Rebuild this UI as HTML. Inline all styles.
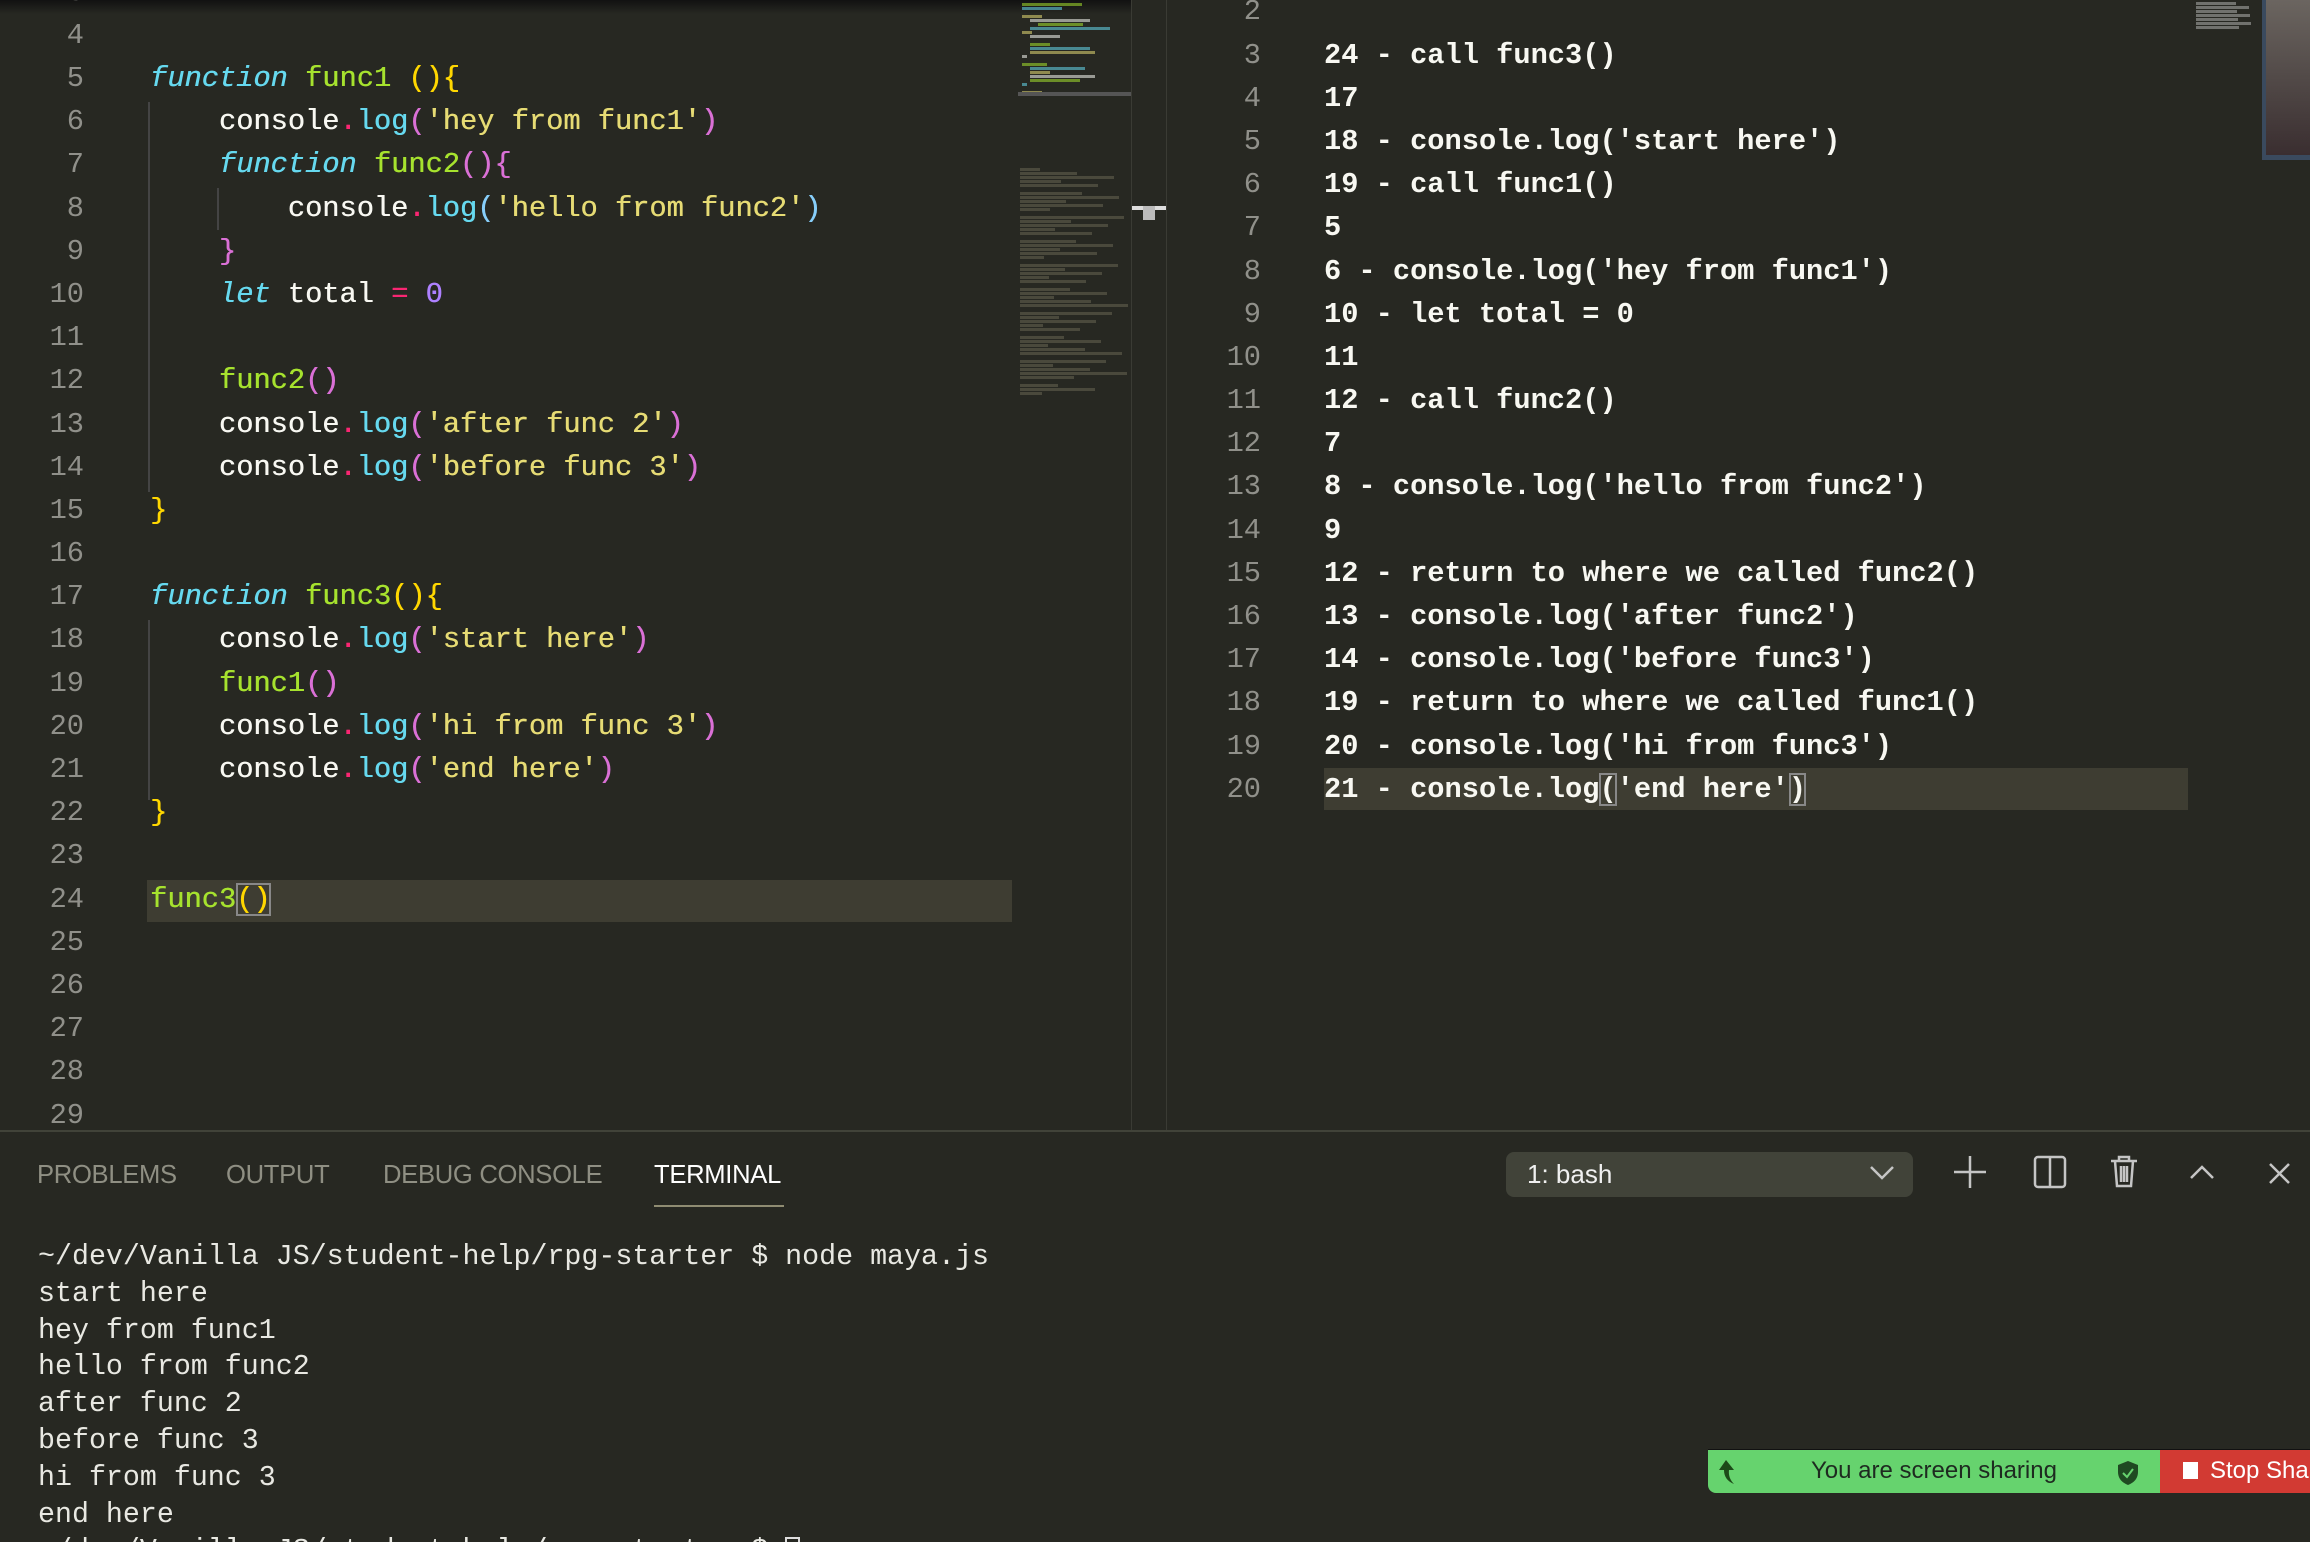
<!DOCTYPE html>
<html><head><meta charset="utf-8"><style>
*{margin:0;padding:0;box-sizing:border-box}
html,body{width:2310px;height:1542px;overflow:hidden}
body{background:#272822;position:relative;font-family:"Liberation Mono",monospace}
.ln{position:absolute;font-size:28.7px;line-height:43.19px;height:43.19px;white-space:pre;color:#90908a;text-align:right}
.cd{position:absolute;font-size:28.7px;line-height:43.19px;height:43.19px;white-space:pre;color:#f8f8f2;text-shadow:0.4px 0 0 currentColor}
.k{color:#66d9ef;font-style:italic}.f{color:#a6e22e}.s{color:#e6db74}.p{color:#f92672}.m{color:#66d9ef}.n{color:#ae81ff}
.g{color:#ffd700}.o{color:#da70d6}.b{color:#87cefa}
.r{color:#f8f8f2;font-weight:bold;text-shadow:none}
.t{position:absolute;left:38px;font-size:28.3px;line-height:36.8px;white-space:pre;color:#e8e8e2;height:303px;overflow:hidden}
.tab{position:absolute;top:1161px;font-family:"Liberation Sans",sans-serif;font-size:25.6px;color:#8f8f83;letter-spacing:-0.3px}
.mm{position:absolute;height:3px;opacity:.55}
</style></head><body>
<div style="position:absolute;left:0;top:0;width:1131px;height:14px;background:linear-gradient(#111,rgba(39,40,34,0))"></div>

<div id="L"></div>
<script>
var L=[["4",""],["5",'<span class="k">function</span> <span class="f">func1</span> <span class="g">(){</span>'],
["6",'    console<span class="p">.</span><span class="m">log</span><span class="o">(</span><span class="s">\'hey from func1\'</span><span class="o">)</span>'],
["7",'    <span class="k">function</span> <span class="f">func2</span><span class="o">(){</span>'],
["8",'        console<span class="p">.</span><span class="m">log</span><span class="b">(</span><span class="s">\'hello from func2\'</span><span class="b">)</span>'],
["9",'    <span class="o">}</span>'],
["10",'    <span class="k">let</span> total <span class="p">=</span> <span class="n">0</span>'],["11",""],
["12",'    <span class="f">func2</span><span class="o">()</span>'],
["13",'    console<span class="p">.</span><span class="m">log</span><span class="o">(</span><span class="s">\'after func 2\'</span><span class="o">)</span>'],
["14",'    console<span class="p">.</span><span class="m">log</span><span class="o">(</span><span class="s">\'before func 3\'</span><span class="o">)</span>'],
["15",'<span class="g">}</span>'],["16",""],
["17",'<span class="k">function</span> <span class="f">func3</span><span class="g">(){</span>'],
["18",'    console<span class="p">.</span><span class="m">log</span><span class="o">(</span><span class="s">\'start here\'</span><span class="o">)</span>'],
["19",'    <span class="f">func1</span><span class="o">()</span>'],
["20",'    console<span class="p">.</span><span class="m">log</span><span class="o">(</span><span class="s">\'hi from func 3\'</span><span class="o">)</span>'],
["21",'    console<span class="p">.</span><span class="m">log</span><span class="o">(</span><span class="s">\'end here\'</span><span class="o">)</span>'],
["22",'<span class="g">}</span>'],["23",""],
["24",'<span class="f">func3</span><span class="g"><span style="outline:2px solid #888;outline-offset:-2px">()</span></span>'],
["25",""],["26",""],["27",""],["28",""],["29",""]];
var h='<div style="position:absolute;left:147px;top:880px;width:865px;height:42px;background:#3e3d32"></div>';
h+='<div style="position:absolute;left:148px;top:102px;width:2px;height:390px;background:#444"></div>';
h+='<div style="position:absolute;left:148px;top:620px;width:2px;height:180px;background:#444"></div>';
h+='<div style="position:absolute;left:217px;top:188px;width:2px;height:42px;background:#444"></div>';
h+='<div class="ln" style="left:0;width:84px;top:-29.4px">3</div>';
for(var i=0;i<L.length;i++){var y=13.8+i*43.19;
h+='<div class="ln" style="left:0;width:84px;top:'+y+'px">'+L[i][0]+'</div>';
h+='<div class="cd" style="left:150px;top:'+y+'px">'+L[i][1]+'</div>';}
var R=["","24 - call func3()","17","18 - console.log('start here')","19 - call func1()","5","6 - console.log('hey from func1')","10 - let total = 0","11","12 - call func2()","7","8 - console.log('hello from func2')","9","12 - return to where we called func2()","13 - console.log('after func2')","14 - console.log('before func3')","19 - return to where we called func1()","20 - console.log('hi from func3')","21 - console.log<span style=\"outline:2px solid #888;outline-offset:-2px\">(</span>'end here'<span style=\"outline:2px solid #888;outline-offset:-2px\">)</span>"];
h+='<div style="position:absolute;left:1324px;top:768px;width:864px;height:42px;background:#3e3d32"></div>';
for(var j=0;j<R.length;j++){var y=-9.6+j*43.19;
h+='<div class="ln" style="left:1167px;width:94px;top:'+y+'px">'+(j+2)+'</div>';
h+='<div class="cd r" style="left:1324px;top:'+y+'px">'+R[j]+'</div>';}
var cols=['#a6e22e','#66d9ef','#e6db74','#f8f8f2'];
var mm=[[0,0,60],[0,1,40],[0,3,20],[1,4,60],[2,5,45],[1,6,80],[0,7,10],[1,8,30],[1,10,20],[1,11,60],[1,12,65],[0,13,5],[0,15,25],[1,16,55],[1,17,20],[1,18,65],[1,19,50],[0,20,5],[0,22,20]];
for(var k=0;k<mm.length;k++){h+='<div class="mm" style="left:'+(1022+mm[k][0]*8)+'px;top:'+(3+mm[k][1]*4)+'px;width:'+mm[k][2]+'px;background:'+cols[k%4]+'"></div>';}
h+='<div style="position:absolute;left:1018px;top:92px;width:113px;height:4px;background:#555"></div>';
for(var k=0;k<57;k++){var yy=168+k*4;if(k%6==5)continue;h+='<div class="mm" style="left:1020px;top:'+yy+'px;width:'+(20+((k*37)%90))+'px;background:#75715e;opacity:.45"></div>';}
for(var k=0;k<7;k++){h+='<div class="mm" style="left:2196px;top:'+(2+k*4)+'px;width:'+(40+(k*13)%25)+'px;background:#ccc;opacity:.45"></div>';}
document.getElementById('L').innerHTML=h;
</script>
<div style="position:absolute;left:1131px;top:0;width:1px;height:1131px;background:#3a3b34"></div>
<div style="position:absolute;left:1166px;top:0;width:1px;height:1131px;background:#3a3b34"></div>
<div style="position:absolute;left:1132px;top:206px;width:34px;height:4px;background:#ddd"></div>
<div style="position:absolute;left:1143px;top:206px;width:12px;height:14px;background:#bbb"></div>
<div style="position:absolute;left:2262px;top:0;width:48px;height:160px;background:#3a4a5e"></div>
<div style="position:absolute;left:2266px;top:0;width:44px;height:155px;background:linear-gradient(180deg,#6b6560,#524a48 50%,#3a2e30)"></div>
<div style="position:absolute;left:0;top:1130px;width:2310px;height:2px;background:#414339"></div>
<div class="tab" style="left:37px">PROBLEMS</div>
<div class="tab" style="left:226px">OUTPUT</div>
<div class="tab" style="left:383px">DEBUG CONSOLE</div>
<div class="tab" style="left:654px;color:#fff">TERMINAL</div>
<div style="position:absolute;left:654px;top:1205px;width:130px;height:2px;background:#8f8c72"></div>
<div style="position:absolute;left:1506px;top:1152px;width:407px;height:45px;background:#414339;border-radius:8px"></div>
<div style="position:absolute;left:1527px;top:1159px;font-family:'Liberation Sans',sans-serif;font-size:26px;color:#f0f0f0">1: bash</div>
<svg style="position:absolute;left:0;top:0" width="2310" height="1542" fill="none" stroke="#c5c5c5" stroke-width="2.5">
<path d="M1871 1167 l11 11 l11 -11"/>
<path d="M1954 1172 h32 M1970 1156 v32"/>
<rect x="2035" y="1157" width="30" height="30" rx="3"/><path d="M2050 1157 v30"/>
<path d="M2111 1161 h26 M2119 1161 v-4 h10 v4 M2115 1161 l2 25 h14 l2 -25 M2121 1166 v16 M2124 1166 v16 M2127 1166 v16"/>
<path d="M2191 1178 l11 -11 l11 11"/>
<path d="M2270 1164 l19 19 M2289 1164 l-19 19"/>
</svg>
<div class="t" style="top:1239px">~/dev/Vanilla JS/student-help/rpg-starter $ node maya.js
start here
hey from func1
hello from func2
after func 2
before func 3
hi from func 3
end here
~/dev/Vanilla JS/student-help/rpg-starter $ <span style="display:inline-block;width:15px;height:28px;border:2px solid #ddd;vertical-align:middle"></span></div>
<div style="position:absolute;left:1708px;top:1449px;width:452px;height:44px;background:#66d36e;border-radius:0 0 0 8px;border-top:1px solid #111"></div>
<div style="position:absolute;left:2160px;top:1449px;width:150px;height:44px;background:#d23a33;border-top:1px solid #111"></div>
<svg style="position:absolute;left:1716px;top:1458px" width="24" height="28"><path d="M10 2 L3 12 H8 Q8 22 18 26 Q12 20 13 12 H18 Z" fill="#1d4a18"/></svg>
<div style="position:absolute;left:1811px;top:1457px;font-family:'Liberation Sans',sans-serif;font-size:24px;color:#1e2a20;white-space:nowrap">You are screen sharing</div>
<svg style="position:absolute;left:2117px;top:1460px" width="22" height="26"><path d="M11 1 L21 5 V12 Q21 21 11 25 Q1 21 1 12 V5 Z" fill="#1f4a22"/><path d="M6 13 l4 4 l6 -8" stroke="#66d36e" stroke-width="2" fill="none"/></svg>
<div style="position:absolute;left:2183px;top:1462px;width:15px;height:17px;background:#fff"></div>
<div style="position:absolute;left:2210px;top:1457px;font-family:'Liberation Sans',sans-serif;font-size:24px;color:#fff;white-space:nowrap">Stop Share</div>
</body></html>
